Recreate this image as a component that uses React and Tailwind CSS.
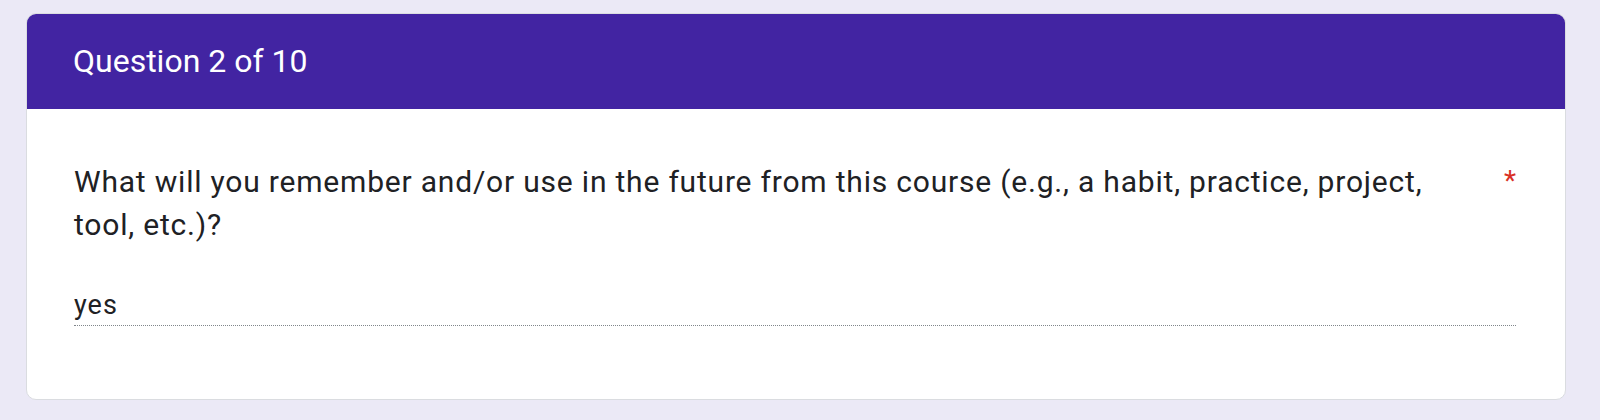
import React from "react";

const font = { fontFamily: "Roboto, Arial, sans-serif" };

export default function App() {
  return (
    <div
      className="w-[1600px] h-[420px] bg-[#ebe9f6] pt-[13px] pl-[26px] pr-[34px]"
      style={font}
    >
      <div className="w-[1540px] h-[387px] rounded-[10px] border border-[#dadce0] bg-white overflow-hidden">
        {/* header */}
        <div className="h-[96px] bg-[#4224a2] flex items-center pl-[47px] -mx-px -mt-px">
          <h1 className="text-[32px] text-white font-normal">Question 2 of 10</h1>
        </div>
        {/* body */}
        <div className="pt-[51px] pl-[47px] pr-[49px]">
          <div className="flex items-start">
            <p className="flex-1 text-[30px] leading-[43px] tracking-[0.8px] text-[#202124]">
              What will you remember and/or use in the future from this course
              (e.g., a habit, practice, project, tool, etc.)?
            </p>
            <span className="ml-6 text-[28px] leading-[42px] text-[#d93025]">
              *
            </span>
          </div>
          <div className="mt-[41px] pb-[2px] border-b border-dotted border-[#80868b] text-[27px] leading-[36px] tracking-[1px] text-[#202124]">
            yes
          </div>
        </div>
      </div>
    </div>
  );
}
